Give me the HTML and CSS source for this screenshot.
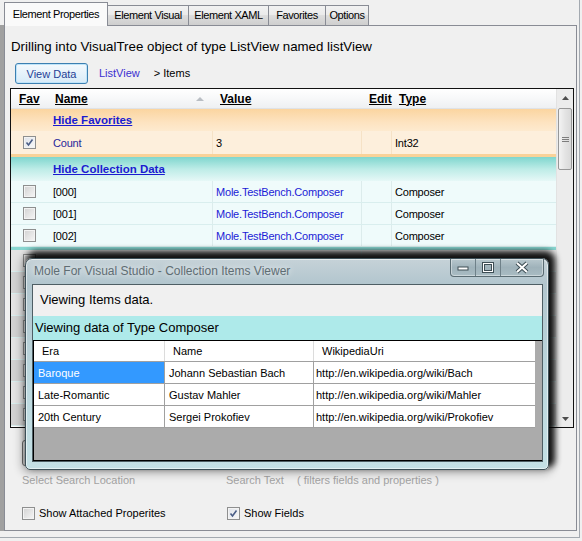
FILE: index.html
```html
<!DOCTYPE html>
<html lang="en">
<head>
    <meta charset="UTF-8">
    <title>Mole - Element Properties</title>
    <link rel="stylesheet" href="styles.css">
</head>
<body>
<div class="window">
    <div class="tabs">
        <div class="tab active">Element Properties</div>
        <div class="tab w-visual">Element Visual</div>
        <div class="tab w-xaml">Element XAML</div>
        <div class="tab w-fav">Favorites</div>
        <div class="tab w-opt">Options</div>
    </div>
    <div class="body-row">
        <div class="gutter"></div>
        <div class="panel">
            <h1 class="drill">Drilling into VisualTree object of type ListView named listView</h1>
            <div class="crumbs">
                <button class="btn">View Data</button>
                <a class="crumb">ListView</a>
                <span class="crumb-here">&gt; Items</span>
            </div>

            <!-- property grid -->
            <div class="props">
                <div class="props-rows">
                    <div class="row head">
                        <span>Fav</span>
                        <span class="sorted">Name <i class="sort-arrow"></i></span>
                        <span>Value</span>
                        <span>Edit</span>
                        <span>Type</span>
                    </div>
                    <div class="group fav-group"><a>Hide Favorites</a></div>
                    <div class="row fav-row">
                        <span class="cell-cb"><span class="cb checked"><svg viewBox="0 0 11 11" width="11" height="11"><path d="M2.5 5.5 L4.5 8 L8.5 2.5" fill="none" stroke="#4a5d86" stroke-width="1.6"/></svg></span></span>
                        <span class="name fav-name">Count</span>
                        <span class="val">3</span>
                        <span></span>
                        <span class="type">Int32</span>
                    </div>
                    <div class="fav-band"></div>
                    <div class="group coll-group"><a>Hide Collection Data</a></div>
                    <div class="row item">
                        <span class="cell-cb"><span class="cb"></span></span>
                        <span class="name">[000]</span>
                        <span class="val link">Mole.TestBench.Composer</span>
                        <span></span>
                        <span class="type">Composer</span>
                    </div>
                    <div class="row item">
                        <span class="cell-cb"><span class="cb"></span></span>
                        <span class="name">[001]</span>
                        <span class="val link">Mole.TestBench.Composer</span>
                        <span></span>
                        <span class="type">Composer</span>
                    </div>
                    <div class="row item">
                        <span class="cell-cb"><span class="cb"></span></span>
                        <span class="name">[002]</span>
                        <span class="val link">Mole.TestBench.Composer</span>
                        <span></span>
                        <span class="type">Composer</span>
                    </div>
                    <div class="coll-band"></div>
                    <div class="row item dim"><span class="cell-cb"><span class="cb"></span></span><span></span><span></span><span></span><span></span></div>
                    <div class="row item dim alt"><span class="cell-cb"><span class="cb"></span></span><span></span><span></span><span></span><span></span></div>
                    <div class="row item dim"><span class="cell-cb"><span class="cb"></span></span><span></span><span></span><span></span><span></span></div>
                    <div class="row item dim alt"><span class="cell-cb"><span class="cb"></span></span><span></span><span></span><span></span><span></span></div>
                    <div class="row item dim"><span class="cell-cb"><span class="cb"></span></span><span></span><span></span><span></span><span></span></div>
                    <div class="row item dim alt"><span class="cell-cb"><span class="cb"></span></span><span></span><span></span><span></span><span></span></div>
                    <div class="row item dim"><span class="cell-cb"><span class="cb"></span></span><span></span><span></span><span></span><span></span></div>
                    <div class="row item dim alt"><span class="cell-cb"><span class="cb"></span></span><span></span><span></span><span></span><span></span></div>
                </div>
                <div class="vscroll">
                    <div class="sb-btn"><svg viewBox="0 0 7 4" width="7" height="4"><path d="M0 4 L3.5 0 L7 4Z" fill="#4d4d4d"/></svg></div>
                    <div class="sb-thumb"><span></span><span></span><span></span></div>
                    <div class="sb-track"></div>
                    <div class="sb-btn"><svg viewBox="0 0 7 4" width="7" height="4"><path d="M0 0 L3.5 4 L7 0Z" fill="#4d4d4d"/></svg></div>
                </div>
            </div>

            <div class="combo"></div>
            <div class="labels">
                <span class="lbl-loc">Select Search Location</span>
                <span class="lbl-text">Search Text</span>
                <span>( filters fields and properties )</span>
            </div>
            <div class="checks">
                <label class="check first"><span class="cb"></span>Show Attached Properites</label>
                <label class="check"><span class="cb checked"><svg viewBox="0 0 11 11" width="11" height="11"><path d="M2.5 5.5 L4.5 8 L8.5 2.5" fill="none" stroke="#4a5d86" stroke-width="1.6"/></svg></span>Show Fields</label>
            </div>
        </div>
    </div>

    <!-- collection items viewer dialog -->
    <div class="dialog">
        <div class="titlebar">
            <span class="title">Mole For Visual Studio - Collection Items Viewer</span>
            <div class="caption">
                <span class="cap-btn"><svg viewBox="0 0 24 17" width="24" height="17"><rect x="7" y="8" width="10" height="3" fill="#fff" stroke="#3e4e55"/></svg></span>
                <span class="cap-btn"><svg viewBox="0 0 24 17" width="24" height="17"><rect x="7.5" y="4.5" width="9" height="8" fill="none" stroke="#3e4e55" stroke-width="3"/><rect x="7.5" y="4.5" width="9" height="8" fill="none" stroke="#fff" stroke-width="1"/></svg></span>
                <span class="cap-btn close"><svg viewBox="0 0 42 17" width="42" height="17"><path d="M16 4 L26 13 M26 4 L16 13" stroke="#3e4e55" stroke-width="4"/><path d="M16 4 L26 13 M26 4 L16 13" stroke="#fff" stroke-width="2"/></svg></span>
            </div>
        </div>
        <div class="client">
            <div class="vi-msg">Viewing Items data.</div>
            <div class="vi-type">Viewing data of Type Composer</div>
            <div class="vi-grid">
                <div class="vg-row vg-head">
                    <span>Era</span><span>Name</span><span>WikipediaUri</span>
                </div>
                <div class="vg-row">
                    <span class="selected">Baroque</span><span>Johann Sebastian Bach</span><span>http://en.wikipedia.org/wiki/Bach</span>
                </div>
                <div class="vg-row">
                    <span>Late-Romantic</span><span>Gustav Mahler</span><span>http://en.wikipedia.org/wiki/Mahler</span>
                </div>
                <div class="vg-row">
                    <span>20th Century</span><span>Sergei Prokofiev</span><span>http://en.wikipedia.org/wiki/Prokofiev</span>
                </div>
            </div>
        </div>
    </div>
</div>
</body>
</html>
```

FILE: styles.css
```css
*,::after,::before{margin:0; padding:0; box-sizing:border-box;}
body{width:582px; height:541px; overflow:hidden; background:#f0f0f0; font-family:"Liberation Sans", Arial, sans-serif; font-size:11px; color:#000;}
.window{position:relative; width:580px; height:538px; border-right:1px solid #a3a9b0; border-bottom:1px solid #a3a9b0;}

/* tabs */
.tabs{display:flex; align-items:flex-end; height:25px; padding-left:4px;}
.tab{height:20px; margin-right:-1px; border:1px solid #898c95; border-bottom:none; background:linear-gradient(#f2f2f2, #ebebeb 45%, #dddddd 50%, #cfcfcf); line-height:19px; text-align:center; letter-spacing:-0.4px; white-space:nowrap;}
.tab.active{position:relative; z-index:1; width:104px; height:24px; margin-bottom:-1px; line-height:22px; background:#fafafa;}
.w-visual{width:82px;}
.w-xaml{width:81px;}
.w-fav{width:58px;}
.w-opt{width:44px;}

.body-row{display:flex; height:506px;}
.gutter{width:4px; background:#a0a0a0;}
.panel{width:573px; border:1px solid #898c95; background:#f0f0f0;}

.drill{font-weight:normal; font-size:13.3px; line-height:16px; margin:13px 0 0 6px; white-space:nowrap;}
.crumbs{display:flex; align-items:center; height:21px; margin:8px 0 0 10px;}
.btn{width:73px; height:21px; border:1px solid #3c7fb1; border-radius:3px; background:linear-gradient(#f4f9fd, #e6f2fb 50%, #d8ebf8); box-shadow:inset 0 0 0 1px #bfe4f9; font:11px "Liberation Sans", Arial, sans-serif; color:#1f3f96;}
.crumb{margin-left:11px; color:#3b2fd0; margin-top:-2px;}
.crumb-here{margin-left:14px; margin-top:-2px;}

/* property grid */
.props{display:flex; width:564px; height:340px; margin:4px 0 0 5px; border:1px solid #111; background:#fff; overflow:hidden;}
.props-rows{width:545px;}
.row{display:grid; grid-template-columns:36px 165px 149px 30px 165px; align-items:center; height:22px; white-space:nowrap; letter-spacing:-0.2px;}
.row > span{height:100%; display:flex; align-items:center;}
.head{height:20px; background:linear-gradient(#ffffff, #f7f8f9 50%, #eef0f2); border-bottom:1px solid #dfe2e6; font-weight:bold; font-size:12px; letter-spacing:0;}
.head > span{padding-left:8px; text-decoration:underline;}
.head .sorted{justify-content:space-between; padding-right:8px;}
.sort-arrow{width:0; height:0; border-left:4px solid transparent; border-right:4px solid transparent; border-bottom:4px solid #b9bec4;}

.group{height:22px; padding-left:42px; display:flex; align-items:center; font-weight:bold; font-size:11.5px;}
.group a{color:#1b1bd0; text-decoration:underline;}
.fav-group{background:linear-gradient(#fbd5a0, #fde3c0 60%, #fdeacf);}
.fav-row{height:23px; background:#fdefdc;}
.fav-band{height:3px; background:#f9d298;}
.coll-group{height:24px; background:linear-gradient(#7fd6ce, #bdece7 50%, #e6f8f7);}
.item{background:#effbfb; border-bottom:1px solid #d9eeee;}
.coll-band{height:3px; background:#88d7d1;}
.item.dim{background:#e4e4e4;}
.item.dim.alt{background:#d3d3d3;}

.cell-cb{padding-left:12px;}
.name{padding-left:6px;}
.fav-name{color:#27279a;}
.val{padding-left:3px; border-left:1px solid #dcecec;}
.fav-row .val{border-left-color:#f6e2c6;}
.row > span:nth-child(4){border-left:1px solid #dcecec;}
.fav-row > span:nth-child(4){border-left-color:#f6e2c6;}
.type{padding-left:3px; border-left:1px solid #dcecec;}
.fav-row .type{border-left-color:#f6e2c6;}
.head > span{border-left:none !important;}
.link{color:#1c1cd6;}

.cb{display:inline-flex; align-items:center; justify-content:center; width:13px; height:13px; border:1px solid #8e8f8f; background:linear-gradient(135deg, #d2d2d2, #f6f6f6); box-shadow:inset 0 0 0 1px #f3f3f3;}
.cb.checked{background:linear-gradient(135deg, #dfe3ea, #f8f8f8);}

.vscroll{width:17px; display:flex; flex-direction:column; background:#ececec; border-left:1px solid #e2e2e2;}
.sb-btn{height:17px; display:flex; align-items:center; justify-content:center;}
.sb-thumb{height:62px; margin:2px 1px 0; border:1px solid #979797; border-radius:2px; background:linear-gradient(to right, #f3f3f3, #e4e4e4 50%, #d9d9d9); display:flex; flex-direction:column; align-items:center; justify-content:center; gap:1px;}
.sb-thumb span{width:7px; height:1px; background:#7d7d7d;}
.sb-track{flex:1;}

/* search area */
.combo{width:190px; height:26px; margin:12px 0 0 17px; border:1px solid #707070; border-radius:3px; background:linear-gradient(#f2f2f2, #ebebeb 50%, #dddddd);}
.labels{display:flex; height:14px; margin:7px 0 0 17px; color:#a3a3a3; line-height:14px; white-space:nowrap;}
.lbl-loc{width:204px;}
.lbl-text{width:71px;}
.checks{display:flex; align-items:center; height:14px; margin:19px 0 0 17px;}
.check{display:flex; align-items:center; gap:4px; white-space:nowrap;}
.check.first{width:205px;}

/* dialog */
.dialog{position:absolute; left:25px; top:258px; width:524px; height:212px; display:flex; flex-direction:column; padding:0 5px 7px 6px; border:1px solid #3d5058; border-radius:7px 7px 5px 5px; background:linear-gradient(#c6d2d8, #b2c6ce 25px, #bcd8de 60%, #c4e0e5); box-shadow:inset 0 0 0 1px rgba(255,255,255,.55), 4px -5px 6px 2px rgba(0,0,0,.9), 0 0 10px 3px rgba(0,0,0,.3);}
.titlebar{height:25px; display:flex; justify-content:space-between; align-items:flex-start;}
.title{margin:5px 0 0 2px; font-size:12px; color:#5f6d73; text-shadow:0 0 6px #fff;}
.caption{display:flex; height:18px; margin-right:-1px; border:1px solid #5a6c73; border-top:none; border-radius:0 0 4px 4px; background:linear-gradient(#b8c7cd, #9fb2ba 50%, #a9bcc3); box-shadow:inset 0 0 0 1px rgba(255,255,255,.4); overflow:hidden;}
.cap-btn{width:25px; height:17px; border-right:1px solid #6f8189;}
.cap-btn.close{width:42px; border-right:none;}
.cap-btn svg{display:block;}
.client{flex:1; display:flex; flex-direction:column; border:1px solid #4e5e64; background:#f0f0f0;}
.vi-msg{height:31px; line-height:29px; padding-left:7px; font-size:13px;}
.vi-type{height:24px; line-height:23px; padding-left:2px; font-size:13px; background:#aeeaea;}
.vi-grid{flex:1; background:#ababab; border-top:1px solid #000; border-left:1px solid #000; border-bottom:1px solid #000;}
.vg-row{display:grid; grid-template-columns:131px 149px 221px; width:501px; height:22px; background:#fff; border-bottom:1px solid #a0a0a0; font-size:11px; white-space:nowrap;}
.vg-row span{display:flex; align-items:center; padding-left:4px; border-right:1px solid #a0a0a0;}
.vg-row span:last-child{padding-left:2px; border-right:none;}
.vg-head{height:21px;}
.vg-head span{padding-left:8px; border-right-color:#dcdcdc;}
.vg-head span:last-child{padding-left:8px;}
.selected{background:#3399ff; color:#fff;}
```
